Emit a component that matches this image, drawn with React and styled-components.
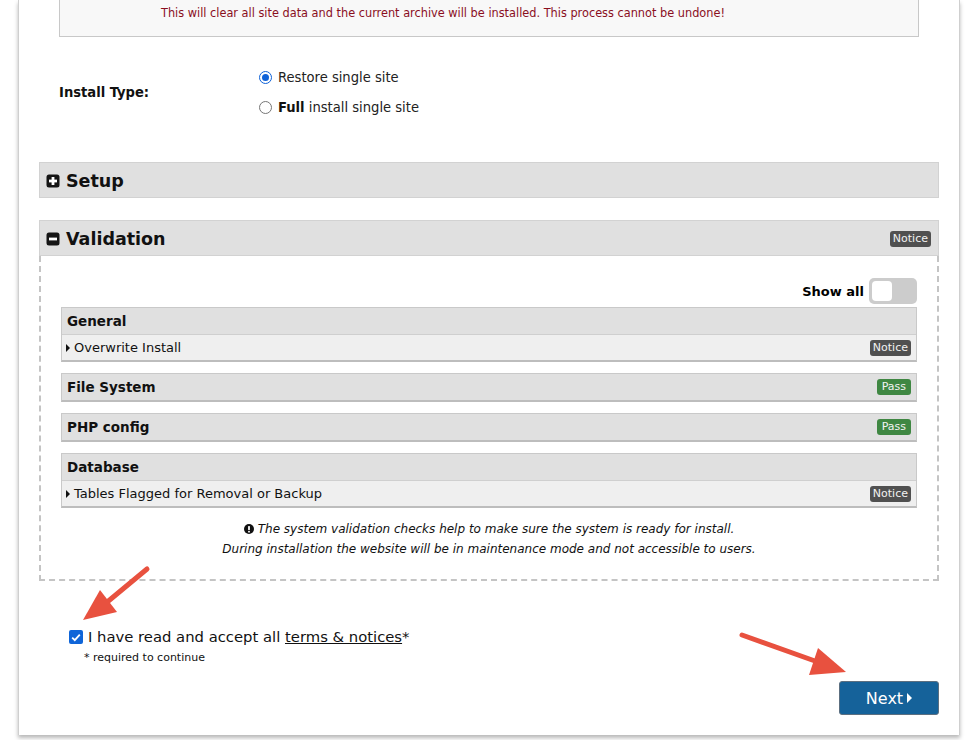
import React from "react";
import styled, { createGlobalStyle } from "styled-components";

const Global = createGlobalStyle`
  html, body { margin: 0; padding: 0; background: #fff; }
  body { font-family: "DejaVu Sans", Verdana, sans-serif; color: #000; }
`;

const Page = styled.div`
  position: relative;
  width: 969px;
  height: 740px;
  overflow: hidden;
`;

const Frame = styled.div`
  margin-left: 18px;
  width: 942px;
  border-left: 1px solid #cfcfcf;
  border-right: 1px solid #cfcfcf;
  box-shadow: 0 3px 4px rgba(0, 0, 0, 0.28);
  background: #fff;
  padding: 0 20px 20px;
  box-sizing: border-box;
  display: flex;
  flex-direction: column;
`;

const Warning = styled.div`
  margin: 0 20px;
  background: #f8f8f8;
  border: 1px solid #c8c8c8;
  border-top: 0;
  padding: 6px 0 16px 101px;
  font-family: "DejaVu Sans Condensed", "Liberation Sans", Arial, sans-serif;
  font-size: 12.6px;
  line-height: 14px;
  color: #8a0f1e;
`;

const InstallRow = styled.div`
  display: grid;
  grid-template-columns: 200px 1fr;
  align-items: center;
  margin: 32px 20px 0;
  font-family: "DejaVu Sans Condensed", "Liberation Sans", Arial, sans-serif;
  font-size: 14.6px;
`;

const FieldLabel = styled.div`
  font-weight: bold;
  color: #111;
  margin-top: -1px;
`;

const RadioList = styled.div`
  display: flex;
  flex-direction: column;
  gap: 14px;
`;

const RadioItem = styled.label`
  display: flex;
  align-items: center;
  gap: 6px;
  line-height: 16px;
  color: #222;
  b { color: #111; }
`;

const Radio = styled.span`
  width: 13px;
  height: 13px;
  box-sizing: border-box;
  border-radius: 50%;
  border: ${(p) => (p.$on ? "1.5px solid #0f62d8" : "1.5px solid #767676")};
  display: flex;
  align-items: center;
  justify-content: center;
  &::after {
    content: "";
    width: 7px;
    height: 7px;
    border-radius: 50%;
    background: ${(p) => (p.$on ? "#0f62d8" : "transparent")};
  }
`;

const SectionHead = styled.div`
  margin-top: ${(p) => p.$mt}px;
  height: 36px;
  box-sizing: border-box;
  background: #e0e0e0;
  border: 1px solid #d2d2d2;
  display: flex;
  align-items: center;
  padding: 1px 7px 0 6px;
  gap: 6px;
  font-weight: bold;
  font-size: 17.5px;
  color: #111;
`;

const HeadTitle = styled.span`
  flex: 1;
  line-height: 20px;
`;

const SectionBody = styled.div`
  border: 2px dashed #c4c4c4;
  border-top: 0;
  padding: 22px 20px 20px;
  display: flex;
  flex-direction: column;
`;

const ToggleRow = styled.div`
  display: flex;
  justify-content: flex-end;
  align-items: center;
  gap: 5px;
  font-weight: bold;
  font-size: 13px;
  margin-bottom: 3px;
`;

const Toggle = styled.span`
  width: 48px;
  height: 26px;
  border-radius: 5px;
  background: #cccccc;
  display: flex;
  align-items: center;
  padding: 0 3px;
  box-sizing: border-box;
  &::after {
    content: "";
    width: 20px;
    height: 20px;
    border-radius: 4px;
    background: #fff;
  }
`;

const Groups = styled.div`
  display: flex;
  flex-direction: column;
  gap: 11px;
`;

const Group = styled.div`
  border: 1px solid #c9c9c9;
  border-bottom: 2px solid #bdbdbd;
`;

const GroupHead = styled.div`
  height: 26px;
  background: #e0e0e0;
  display: flex;
  align-items: center;
  justify-content: space-between;
  padding: 0 5px 0 5px;
  font-weight: bold;
  font-size: 13.5px;
  color: #111;
`;

const GroupItem = styled.div`
  height: 25px;
  background: #efefef;
  border-top: 1px solid #cfcfcf;
  display: flex;
  align-items: center;
  padding: 0 5px 0 4px;
  gap: 4px;
  font-size: 13px;
  color: #111;
`;

const ItemText = styled.span`
  flex: 1;
`;

const Badge = styled.span`
  font-size: 11px;
  font-weight: normal;
  line-height: 16px;
  padding: ${(p) => (p.$kind === "pass" ? "0 5px" : "0 3px")};
  border-radius: 3px;
  color: #f2f2f2;
  background: ${(p) => (p.$kind === "pass" ? "#3f8742" : "#505050")};
`;

const Info = styled.div`
  margin-top: 11px;
  text-align: center;
  font-style: italic;
  font-size: 12px;
  line-height: 20px;
  color: #111;
`;

const InfoIcon = styled.svg`
  width: 10px;
  height: 10px;
  vertical-align: -1px;
  margin-right: 4px;
`;

const Terms = styled.div`
  margin: 47px 0 0 30px;
  display: flex;
  flex-direction: column;
`;

const TermsLine = styled.label`
  display: flex;
  align-items: center;
  gap: 5px;
  font-size: 14.8px;
  line-height: 18px;
  color: #111;
  a { color: #111; text-decoration: underline; }
`;

const Check = styled.span`
  width: 14px;
  height: 14px;
  border-radius: 2px;
  background: #0f65d8;
  display: flex;
  align-items: center;
  justify-content: center;
`;

const Required = styled.div`
  margin: 5px 0 0 15px;
  font-size: 11px;
  line-height: 14px;
  color: #111;
`;

const Footer = styled.div`
  display: flex;
  justify-content: flex-end;
  margin-top: 16px;
`;

const NextButton = styled.button`
  width: 100px;
  height: 34px;
  border: 1px solid #5c6f80;
  border-radius: 3px;
  background: #15629a;
  color: #fff;
  font-family: "DejaVu Sans", Verdana, sans-serif;
  font-size: 16px;
  display: flex;
  align-items: center;
  justify-content: center;
  gap: 4px;
`;

const Overlay = styled.svg`
  position: absolute;
  left: 0;
  top: 0;
  pointer-events: none;
`;

const SquareIcon = ({ plus }) => (
  <svg width="14" height="14" viewBox="0 0 14 14">
    <rect x="0.5" y="0.5" width="13" height="13" rx="2.5" fill="#151515" />
    <rect x="3" y="5.6" width="8" height="2.8" fill="#fff" />
    {plus && <rect x="5.6" y="3" width="2.8" height="8" fill="#fff" />}
  </svg>
);

const Caret = ({ color = "#111", w = 4, h = 8 }) => (
  <svg width={w} height={h} viewBox="0 0 4 8">
    <path d="M0 0 L4 4 L0 8 Z" fill={color} />
  </svg>
);

export default function App() {
  return (
    <Page>
      <Global />
      <Frame>
        <Warning>
          This will clear all site data and the current archive will be installed. This process cannot be undone!
        </Warning>

        <InstallRow>
          <FieldLabel>Install Type:</FieldLabel>
          <RadioList>
            <RadioItem>
              <Radio $on />
              Restore single site
            </RadioItem>
            <RadioItem>
              <Radio />
              <span>
                <b>Full</b> install single site
              </span>
            </RadioItem>
          </RadioList>
        </InstallRow>

        <SectionHead $mt={47}>
          <SquareIcon plus />
          <HeadTitle>Setup</HeadTitle>
        </SectionHead>

        <SectionHead $mt={22}>
          <SquareIcon />
          <HeadTitle>Validation</HeadTitle>
          <Badge>Notice</Badge>
        </SectionHead>
        <SectionBody>
          <ToggleRow>
            Show all <Toggle />
          </ToggleRow>
          <Groups>
            <Group>
              <GroupHead>General</GroupHead>
              <GroupItem>
                <Caret />
                <ItemText>Overwrite Install</ItemText>
                <Badge>Notice</Badge>
              </GroupItem>
            </Group>
            <Group>
              <GroupHead>
                File System <Badge $kind="pass">Pass</Badge>
              </GroupHead>
            </Group>
            <Group>
              <GroupHead>
                PHP config <Badge $kind="pass">Pass</Badge>
              </GroupHead>
            </Group>
            <Group>
              <GroupHead>Database</GroupHead>
              <GroupItem>
                <Caret />
                <ItemText>Tables Flagged for Removal or Backup</ItemText>
                <Badge>Notice</Badge>
              </GroupItem>
            </Group>
          </Groups>
          <Info>
            <InfoIcon viewBox="0 0 10 10">
              <circle cx="5" cy="5" r="5" fill="#111" />
              <rect x="4.1" y="2" width="1.8" height="4" rx="0.6" fill="#fff" />
              <rect x="4.1" y="6.8" width="1.8" height="1.6" rx="0.5" fill="#fff" />
            </InfoIcon>
            The system validation checks help to make sure the system is ready for install.
            <br />
            During installation the website will be in maintenance mode and not accessible to users.
          </Info>
        </SectionBody>

        <Terms>
          <TermsLine>
            <Check>
              <svg width="10" height="9" viewBox="0 0 10 9">
                <path d="M1.2 4.6 L3.8 7.2 L8.8 1.6" stroke="#fff" strokeWidth="1.8" fill="none" />
              </svg>
            </Check>
            <span>
              I have read and accept all <a>terms &amp; notices</a>*
            </span>
          </TermsLine>
          <Required>* required to continue</Required>
        </Terms>

        <Footer>
          <NextButton>
            Next <Caret color="#fff" w={5} h={10} />
          </NextButton>
        </Footer>
      </Frame>

      <Overlay width="969" height="740" viewBox="0 0 969 740">
        <line x1="147" y1="569" x2="106" y2="603" stroke="#e8513f" strokeWidth="5" strokeLinecap="round" />
        <polygon points="83,620 100,590 117,612" fill="#e8513f" />
        <line x1="742" y1="635" x2="815" y2="661" stroke="#e8513f" strokeWidth="5" strokeLinecap="round" />
        <polygon points="846,672 818,648 809,675" fill="#e8513f" />
      </Overlay>
    </Page>
  );
}
